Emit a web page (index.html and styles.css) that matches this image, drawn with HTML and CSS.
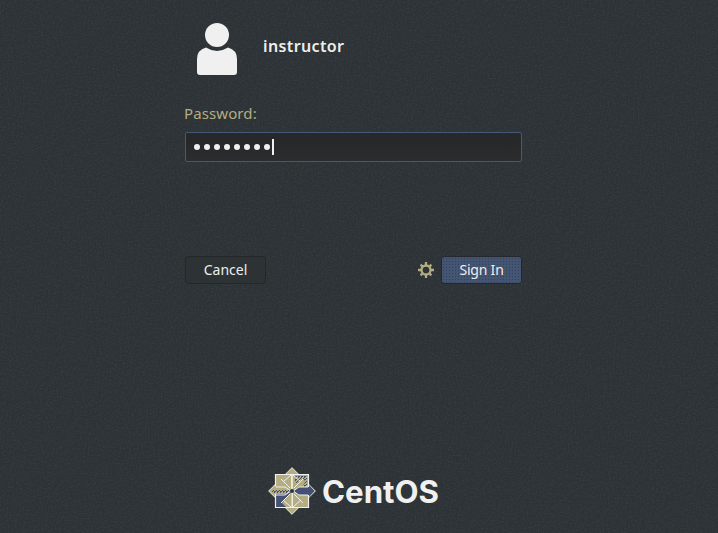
FILE: index.html
```html
<!DOCTYPE html>
<html lang="en">
<head>
<meta charset="utf-8">
<title>Sign In</title>
<link rel="stylesheet" href="styles.css">
</head>
<body>
<svg class="grain" aria-hidden="true"><filter id="noise"><feTurbulence type="fractalNoise" baseFrequency=".6" numOctaves="2" seed="3"/><feColorMatrix values="0 0 0 0 .4  0 0 0 0 .44  0 0 0 0 .43  0 1.5 0 0 -.6"/></filter><rect width="100%" height="100%" filter="url(#noise)"/></svg>
<main class="login">
  <header class="user">
    <svg class="avatar" width="40" height="52" viewBox="0 0 40 52"><circle cx="20" cy="12" r="12"/><path d="M9 24.5Q20 31.500 31 24.500Q40 27 40 36V49Q40 52 37 52H3Q0 52 0 49V36Q0 27 9 24.500Z"/></svg>
    <h1 class="name">instructor</h1>
  </header>
  <div class="label">Password:</div>
  <div class="entry"><span class="dots"><i></i><i></i><i></i><i></i><i></i><i></i><i></i><i></i></span><span class="caret"></span></div>
  <div class="actions">
    <button class="button">Cancel</button>
    <svg class="gear" width="16" height="16" viewBox="0 0 16 16"><circle cx="8" cy="8" r="4.5"/><path d="M8 0V3M8 13V16M0 8H3M13 8H16M2.6 2.6L4.7 4.7M11.3 11.3L13.4 13.4M2.6 13.4L4.7 11.3M11.3 4.7L13.4 2.6"/></svg>
    <button class="button primary">Sign In</button>
  </div>
</main>
<footer class="brand">
  <svg width="184" height="50" viewBox="0 0 184 50">
    <defs>
      <pattern id="dither" width="3" height="3" patternUnits="userSpaceOnUse"><rect width="3" height="3" fill="#b4ad82"/><path d="M0 0H2V1H1V2H0ZM2 2H3V3H2Z" fill="#445173"/></pattern>
    </defs>
    <path fill="#b4ad82" stroke="#f0f0ec" d="M24 .7L47.300 24L24 47.300L.7 24Z"/>
    <path fill="#445173" d="M40 17L46.500 24L40 31Z"/>
    <g stroke="#f0f0ec" stroke-width="1.200">
      <path fill="#b4ad82" d="M7.500 7.500H24V24H7.500Z"/>
      <path fill="#b4ad82" d="M24 7.500H40.500V24H24Z"/>
      <path fill="#b4ad82" d="M24 24H40.500V40.500H24Z"/>
      <path fill="#445173" d="M7.500 24H24V40.500H7.500Z"/>
    </g>
    <path fill="url(#dither)" d="M27 9H39V20H34L38 14L33 12L29 17L27 14Z"/>
    <path fill="#b4ad82" d="M24 24L14 36L18 40H24Z"/>
    <path fill="#445173" d="M26 24L30 20H41L46 24L41 28H30Z"/>
    <path fill="#b4ad82" d="M2 24L8 19H18L23 24L18 27H8Z"/>
    <path fill="url(#dither)" d="M4 23H22V26H4Z"/>
    <g fill="none" stroke="#f0f0ec" stroke-width="1">
      <path d="M24 7V41M8 20H17L23 24L17 28H8M40 20H31L25 24L31 28H40M13 12L22 21M35 12L26 21M13 36L22 27M35 36L26 27M23 8L15 15M25 8L33 15M23 40L15 33M25 40L33 33"/>
    </g>
    <circle cx="24" cy="24" r="2" fill="#2e3436"/>
    <text class="wordmark" x="54" y="35.500" textLength="117" lengthAdjust="spacingAndGlyphs">CentOS</text>
  </svg>
</footer>
</body>
</html>
```
FILE: styles.css
```css
* { box-sizing: border-box; }
body { margin: 0; height: 533px; overflow: hidden; background: #2c3235; display: flex; flex-direction: column; font-family: "Noto Sans", "Open Sans", sans-serif; color: #eeeeec; }
.grain { position: absolute; inset: 0; width: 100%; height: 100%; opacity: .12; z-index: -1; }
.login { width: 337px; margin: 23px 0 0 185px; }
.user { display: flex; gap: 26px; padding-left: 12px; height: 52px; }
.avatar { fill: #f0f0f0; }
.name { margin: 12px 0 0; font-size: 16px; line-height: 22px; font-weight: 600; letter-spacing: .38px; }
.label { margin: 28px 0 0 -1px; height: 22px; color: #b4ad82; font-size: 15px; line-height: 20px; letter-spacing: .1px; }
.entry { margin-top: 7px; height: 30px; border: 1px solid #465777; border-radius: 2px; background: linear-gradient(#27282a 35%, #2b2d2f); padding-left: 8px; display: flex; align-items: center; gap: 1px; }
.dots { display: flex; gap: 4px; margin-right: 1px; }
.dots i { width: 6px; height: 6px; border-radius: 50%; background: #f0f0ee; }
.caret { width: 2px; height: 16px; background: #f0f0ee; }
.actions { margin-top: 94px; display: flex; align-items: center; height: 28px; }
.button { width: 81px; height: 28px; padding: 0; border: 1px solid #24282a; border-radius: 3px; background: #2d3335; color: #eeeeec; font: 14px/20px "Noto Sans", sans-serif; }
.gear { margin-left: auto; margin-right: 7px; fill: none; stroke: #b4ad82; stroke-width: 2.3; }
.primary { background: radial-gradient(circle, #35425a .6px, transparent .8px) 0 0 / 3px 3px, #445573; letter-spacing: -.2px; }
.brand { margin: auto 0 16px 268px; height: 50px; }
.brand svg { display: block; overflow: visible; }
.wordmark { font: 700 31px Inter, sans-serif; fill: #f0f0f0; }
```
